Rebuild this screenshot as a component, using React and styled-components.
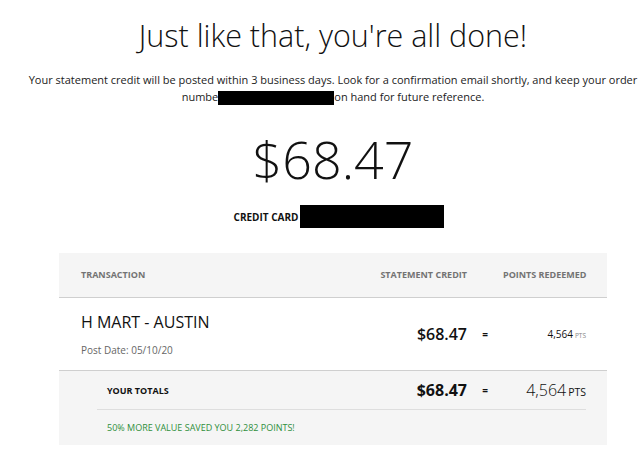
import React from "react";
import styled, { createGlobalStyle } from "styled-components";

const Global = createGlobalStyle`
  html, body { margin: 0; padding: 0; background: #fff; }
  body { font-family: "Open Sans", "Liberation Sans", sans-serif; color: #111; }
`;

const Page = styled.div`
  width: 643px;
  box-sizing: border-box;
  padding-left: 23px;
  display: flex;
  flex-direction: column;
  align-items: center;
`;

const Title = styled.h1`
  margin: 16px 0 0;
  font-size: 30.5px;
  line-height: 39px;
  font-weight: 300;
  color: #111;
  text-align: center;
`;

const Lead = styled.p`
  margin: 16px 0 0;
  font-size: 11px;
  line-height: 17px;
  color: #222;
  text-align: center;
  width: 610px;
`;

const Redact = styled.span`
  display: inline-block;
  background: #000;
  vertical-align: middle;
  width: ${(p) => p.$w}px;
  height: ${(p) => p.$h}px;
`;

const Amount = styled.div`
  margin-top: 24px;
  font-size: 52px;
  line-height: 60px;
  font-weight: 300;
  color: #111;
`;

const CardRow = styled.div`
  margin-top: 16px;
  padding-left: 12px;
  display: flex;
  align-items: center;
  gap: 2px;
  height: 23px;
`;

const CardLabel = styled.span`
  font-size: 10px;
  font-weight: 700;
  color: #111;
`;

const Table = styled.div`
  margin-top: 25px;
  width: 548px;
  display: flex;
  flex-direction: column;
`;

const Grid = styled.div`
  display: grid;
  grid-template-columns: 1fr 120px 36px 83px;
  align-items: center;
`;

const Head = styled(Grid)`
  background: #f5f5f5;
  height: 44px;
  padding: 0 21px 0 22px;
  border-bottom: 1px solid #cfcfcf;
`;

const HeadCell = styled.div`
  font-size: 9px;
  line-height: 12px;
  font-weight: 700;
  color: #737373;
  white-space: nowrap;
  text-align: ${(p) => (p.$right ? "right" : "left")};
`;

const Row = styled(Grid)`
  height: 72px;
  padding: 0 21px 0 22px;
  border-bottom: 1px solid #cfcfcf;
`;

const Merchant = styled.div`
  display: flex;
  flex-direction: column;
`;

const MerchantName = styled.div`
  font-size: 16px;
  line-height: 22px;
  color: #111;
`;

const PostDate = styled.div`
  margin-top: 10px;
  font-size: 10px;
  line-height: 14px;
  color: #666;
`;

const Money = styled.div`
  text-align: right;
  font-size: 16px;
  line-height: 22px;
  font-weight: ${(p) => p.$weight || 600};
  color: #111;
`;

const Eq = styled.div`
  text-align: center;
  font-size: 10px;
  font-weight: 700;
  color: #111;
`;

const Points = styled.div`
  text-align: right;
  font-size: ${(p) => p.$size}px;
  font-weight: ${(p) => p.$weight || 400};
  color: #111;
  white-space: nowrap;
`;

const Unit = styled.span`
  margin-left: 2px;
  font-size: ${(p) => p.$size}px;
  color: ${(p) => p.$color};
  font-weight: 400;
`;

const Totals = styled.div`
  background: #f5f5f5;
  padding: 0 21px 0 38px;
`;

const TotalsRow = styled(Grid)`
  height: 38px;
  padding-left: 10px;
  border-bottom: 1px solid #dedede;
`;

const TotalsLabel = styled.div`
  font-size: 9px;
  font-weight: 700;
  color: #111;
`;

const Saved = styled.div`
  height: 35px;
  padding-left: 10px;
  display: flex;
  align-items: center;
  font-size: 9px;
  color: #2f8f3c;
`;

export default function App() {
  return (
    <>
      <Global />
      <Page>
        <Title>Just like that, you're all done!</Title>
        <Lead>
          Your statement credit will be posted within 3 business days. Look for a
          confirmation email shortly, and keep your order numbe
          <Redact $w={116} $h={14} />
          on hand for future reference.
        </Lead>
        <Amount>$68.47</Amount>
        <CardRow>
          <CardLabel>CREDIT CARD</CardLabel>
          <Redact $w={144} $h={23} />
        </CardRow>
        <Table>
          <Head>
            <HeadCell>TRANSACTION</HeadCell>
            <HeadCell $right>STATEMENT CREDIT</HeadCell>
            <HeadCell />
            <HeadCell $right>POINTS REDEEMED</HeadCell>
          </Head>
          <Row>
            <Merchant>
              <MerchantName>H MART - AUSTIN</MerchantName>
              <PostDate>Post Date: 05/10/20</PostDate>
            </Merchant>
            <Money>$68.47</Money>
            <Eq>=</Eq>
            <Points $size={10}>
              4,564<Unit $size={6.5} $color="#888">PTS</Unit>
            </Points>
          </Row>
          <Totals>
            <TotalsRow>
              <TotalsLabel>YOUR TOTALS</TotalsLabel>
              <Money $weight={700}>$68.47</Money>
              <Eq>=</Eq>
              <Points $size={16} $weight={300}>
                4,564<Unit $size={10.5} $color="#111">PTS</Unit>
              </Points>
            </TotalsRow>
            <Saved>50% MORE VALUE SAVED YOU 2,282 POINTS!</Saved>
          </Totals>
        </Table>
      </Page>
    </>
  );
}
